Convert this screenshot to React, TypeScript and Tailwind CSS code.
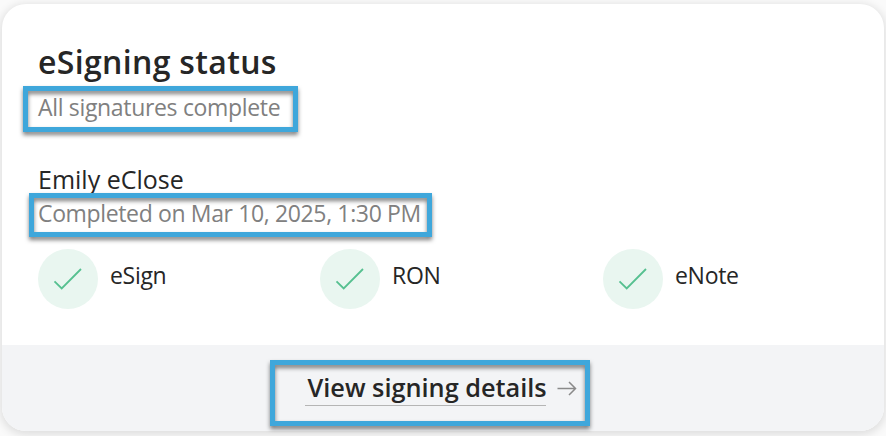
const highlight =
  "pointer-events-none absolute border-[5px] border-[#3fa7db] drop-shadow-[0px_3px_2px_rgba(0,0,0,0.5)]";

function Check({ label }: { label: string }) {
  return (
    <div className="flex">
      <div className="flex size-[60px] items-center justify-center rounded-full bg-[#e9f6f0]">
        <svg width="60" height="60" viewBox="0 0 60 60" fill="none" stroke="#56c090" strokeWidth="1.8">
          <path d="M16.5 32.3L23.7 39.5L43 20" />
        </svg>
      </div>
      <span className="ml-3 mt-[10px] text-[23px] leading-8 tracking-[-0.3px] whitespace-nowrap">{label}</span>
    </div>
  );
}

export default function App() {
  return (
    <div className="h-[436px] w-[886px] overflow-hidden bg-[#fafafa] px-[2px] pt-1 font-['Open_Sans','Noto_Sans',sans-serif] text-[#262626]">
      <section className="flex h-[427px] w-[882px] flex-col rounded-[24px] bg-white shadow-[0_2px_8px_2px_rgba(0,0,0,0.11)]">
        <div className="h-[341px] pl-9 pt-[34px]">
          <h1 className="h-12 w-fit text-[32px] font-semibold leading-[48px] tracking-[0.34px] whitespace-nowrap">eSigning status</h1>
          <div className="relative h-8 w-fit pt-[5px] text-[23px] leading-8 tracking-[-0.33px] whitespace-nowrap text-[#808080]">
            All signatures complete
            <div className={`${highlight} left-[-15px] top-0 h-[46px] w-[275px]`} />
          </div>
          <h2 className="mt-[42px] h-8 w-fit pt-[3px] text-[25px] leading-8 whitespace-nowrap">Emily eClose</h2>
          <div className="relative h-8 w-fit pt-[5px] text-[23px] leading-8 tracking-[-0.36px] whitespace-nowrap text-[#808080]">
            Completed on Mar 10, 2025, 1:30 PM
            <div className={`${highlight} left-[-9px] top-[1px] h-[44px] w-[403px]`} />
          </div>
          <div className="mt-[25px] grid grid-cols-[282px_283px_auto]">
            <Check label="eSign" />
            <Check label="RON" />
            <Check label="eNote" />
          </div>
        </div>
        <footer className="h-[86px] rounded-b-[24px] bg-[#f3f4f6] pl-[268px] pt-[15px]">
          <div className="relative h-[66px] w-[320px]">
            <a className="flex items-center pl-[35px] pt-[9px]">
              <span className="h-[37px] w-[241px] border-b border-[#b5b5b5] pl-[2.5px] text-[25.3px] font-semibold leading-9 whitespace-nowrap">
                View signing details
              </span>
              <svg className="ml-[11px]" width="20" height="16" viewBox="0 0 20 16" fill="none" stroke="#8a8a8a" strokeWidth="1.5">
                <path d="M0.5 8.5H18M12 2L18.5 8.5L12 15" />
              </svg>
            </a>
            <div className={`${highlight} inset-0`} />
          </div>
        </footer>
      </section>
    </div>
  );
}
